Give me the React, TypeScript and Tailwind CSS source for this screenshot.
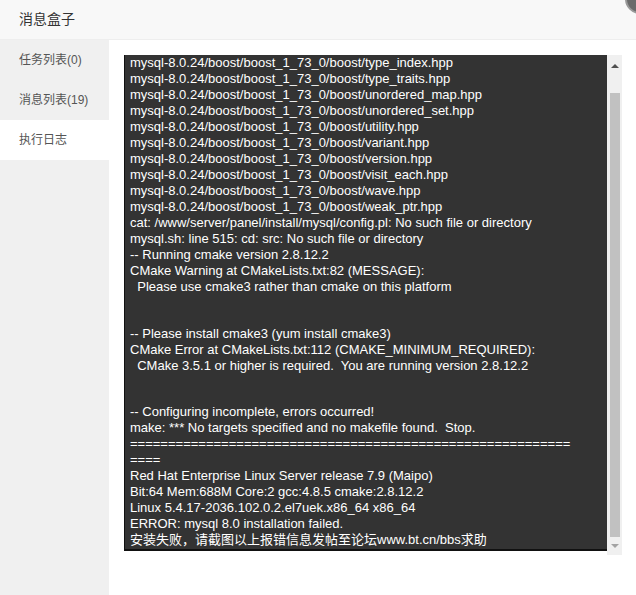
const logLines = [
  "mysql-8.0.24/boost/boost_1_73_0/boost/type_index.hpp",
  "mysql-8.0.24/boost/boost_1_73_0/boost/type_traits.hpp",
  "mysql-8.0.24/boost/boost_1_73_0/boost/unordered_map.hpp",
  "mysql-8.0.24/boost/boost_1_73_0/boost/unordered_set.hpp",
  "mysql-8.0.24/boost/boost_1_73_0/boost/utility.hpp",
  "mysql-8.0.24/boost/boost_1_73_0/boost/variant.hpp",
  "mysql-8.0.24/boost/boost_1_73_0/boost/version.hpp",
  "mysql-8.0.24/boost/boost_1_73_0/boost/visit_each.hpp",
  "mysql-8.0.24/boost/boost_1_73_0/boost/wave.hpp",
  "mysql-8.0.24/boost/boost_1_73_0/boost/weak_ptr.hpp",
  "cat: /www/server/panel/install/mysql/config.pl: No such file or directory",
  "mysql.sh: line 515: cd: src: No such file or directory",
  "-- Running cmake version 2.8.12.2",
  "CMake Warning at CMakeLists.txt:82 (MESSAGE):",
  "  Please use cmake3 rather than cmake on this platform",
  "",
  "",
  "-- Please install cmake3 (yum install cmake3)",
  "CMake Error at CMakeLists.txt:112 (CMAKE_MINIMUM_REQUIRED):",
  "  CMake 3.5.1 or higher is required.  You are running version 2.8.12.2",
  "",
  "",
  "-- Configuring incomplete, errors occurred!",
  "make: *** No targets specified and no makefile found.  Stop.",
  "==========================================================",
  "====",
  "Red Hat Enterprise Linux Server release 7.9 (Maipo)",
  "Bit:64 Mem:688M Core:2 gcc:4.8.5 cmake:2.8.12.2",
  "Linux 5.4.17-2036.102.0.2.el7uek.x86_64 x86_64",
  "ERROR: mysql 8.0 installation failed.",
  "安装失败，请截图以上报错信息发帖至论坛www.bt.cn/bbs求助",
];

const tabs = ["任务列表(0)", "消息列表(19)", "执行日志"];

export default function App() {
  const active = 2;
  return (
    <div
      className="relative w-[636px] h-[595px] overflow-hidden bg-white flex flex-col"
      style={{ fontFamily: '"Liberation Sans", "Noto Sans CJK SC", sans-serif' }}
    >
      <div className="h-10 shrink-0 bg-[#f8f8f8] border-b border-[#eeeeee] flex items-center pl-[19px] text-[14px] text-[#333]">
        消息盒子
      </div>
      {/* close button peeking in at the corner */}
      <div className="absolute left-[625px] top-[-16px] w-[30px] h-[30px] rounded-full bg-[#6b6b6b] border-2 border-[#999]" />

      <div className="flex flex-1 min-h-0">
        <div className="w-[109px] shrink-0 bg-[#f0f0f0] flex flex-col">
          {tabs.map((t, i) => (
            <div
              key={t}
              className={
                "h-10 flex items-center pl-[19px] text-[12px] text-[#555] " +
                (i === active ? "bg-white" : "")
              }
            >
              {t}
            </div>
          ))}
        </div>

        <div className="flex-1 pl-[15px] pt-[15px]">
          <div className="flex items-start">
            <div className="w-[483px] h-[496px] bg-[#333333] border-l border-b-2 border-[#111] flex flex-col justify-end overflow-hidden pl-[5px] pb-[1px] text-white text-[13px] leading-[16px]">
              {logLines.map((l, i) => (
                <div key={i} className="h-4 leading-4 whitespace-pre">
                  {l}
                </div>
              ))}
            </div>
            <div className="w-[15px] h-[500px] bg-[#f0f0f0] flex flex-col items-center">
              <div className="h-[22px] flex items-center justify-center">
                <div className="w-0 h-0 border-l-[4px] border-r-[4px] border-b-[4px] border-l-transparent border-r-transparent border-b-[#505050]" />
              </div>
              <div className="w-[10px] h-[444px] mt-[16px] bg-[#c1c1c1]" />
              <div className="flex-1 flex items-center justify-center">
                <div className="w-0 h-0 border-l-[4px] border-r-[4px] border-t-[4px] border-l-transparent border-r-transparent border-t-[#a3a3a3]" />
              </div>
            </div>
          </div>
        </div>
      </div>
    </div>
  );
}
